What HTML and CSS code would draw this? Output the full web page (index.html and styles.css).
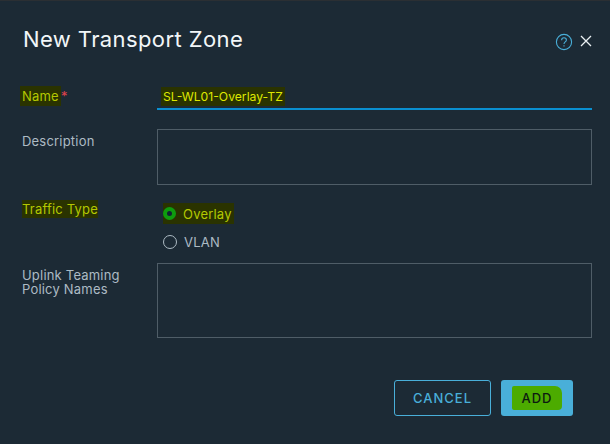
FILE: index.html
```html
<!DOCTYPE html>
<html lang="en">
<head>
    <meta charset="UTF-8">
    <title>New Transport Zone</title>
    <link rel="stylesheet" href="styles.css">
</head>
<body>
    <div class="modal">
        <div class="modal-header">
            <h2>New Transport Zone</h2>
            <svg class="help-icon" width="18" height="18" viewBox="0 0 18 18" fill="none" stroke="#49afd9" stroke-width="1.1">
                <circle cx="9" cy="9" r="7.6"/>
                <path d="M6.6 7.2c0-1.5 1.1-2.4 2.4-2.4s2.4.9 2.4 2.2c0 1.9-2.4 1.9-2.4 3.9"/>
                <path d="M9 12.2v1.2"/>
            </svg>
            <svg class="close-icon" width="12" height="12" viewBox="0 0 12 12" fill="none" stroke="#eaf0f3" stroke-width="1.3">
                <path d="M1 1l10 10M11 1L1 11"/>
            </svg>
        </div>

        <div class="form-row name-row">
            <label><span class="marked name-mark">Name</span><span class="required">*</span></label>
            <div class="name-input"><span class="marked value">SL-WL01-Overlay-TZ</span></div>
        </div>

        <div class="form-row desc-row">
            <label>Description</label>
            <div class="textbox desc-box"></div>
        </div>

        <div class="form-row type-row">
            <label><span class="marked">Traffic Type</span></label>
            <div class="radios">
                <div class="radio radio-on"><span class="dot"></span><span>Overlay</span></div>
                <div class="radio"><span class="dot"></span><span>VLAN</span></div>
            </div>
        </div>

        <div class="form-row uplink-row">
            <label>Uplink Teaming<br>Policy Names</label>
            <div class="textbox uplink-box"></div>
        </div>

        <div class="modal-footer">
            <button class="btn btn-cancel">CANCEL</button>
            <button class="btn btn-add"><span class="add-mark">ADD</span></button>
        </div>
    </div>
</body>
</html>
```

FILE: styles.css
```css
html, body {
    margin: 0;
    height: 100%;
}
body {
    background-color: #1c2a35;
    font-family: Inter, "Noto Sans", sans-serif;
    overflow: hidden;
}
.modal {
    width: 610px;
    height: 444px;
    box-sizing: border-box;
    padding: 23px 18px 0 23px;
    border-top: 1px solid #2b2f33;
}
.modal-header {
    display: flex;
    align-items: center;
    height: 30px;
}
.modal-header h2 {
    margin: 0;
    flex: 1;
    font-size: 22px;
    font-weight: 400;
    letter-spacing: 0.4px;
    color: #f2f6f8;
}
.help-icon {
    margin: 6px 7px 0 0;
}
.close-icon {
    margin: 4px 0 0 0;
}
.form-row {
    display: flex;
    margin-left: -1px;
    font-size: 13px;
    letter-spacing: 0.2px;
    color: #adbbc4;
}
.form-row label {
    width: 135px;
    flex: none;
    line-height: 14px;
}
.marked {
    background-color: #2a3300;
    color: #b4c800;
    padding: 1px 0;
}
.name-mark {
    padding: 2px;
    margin-left: -2px;
}
.required {
    color: #e0434c;
}
.name-row {
    margin-top: 30px;
    height: 26px;
}
.name-row label {
    padding-top: 5px;
}
.name-input {
    flex: 1;
    border-bottom: 2px solid #0a8fd0;
    padding: 4px 0 0 6px;
    height: 20px;
}
.value {
    color: #dfe800;
    font-size: 12.2px;
    letter-spacing: 0;
    padding: 2px;
    margin-left: -2px;
}
.textbox {
    flex: 1;
    border: 1px solid #4f5d67;
    box-sizing: border-box;
}
.desc-row {
    margin-top: 19px;
}
.desc-row label {
    padding-top: 5px;
}
.desc-box {
    height: 56px;
}
.type-row {
    margin-top: 16px;
}
.type-row label {
    padding-top: 1px;
}
.radios {
    display: flex;
    flex-direction: column;
    gap: 11px;
    padding: 3px 0 0 6px;
}
.radio {
    display: flex;
    align-items: center;
    gap: 7px;
    height: 17px;
}
.dot {
    width: 12px;
    height: 12px;
    border: 1px solid #adbbc4;
    border-radius: 50%;
    flex: none;
}
.radio-on {
    background-color: #2a3300;
    color: #b4c800;
    width: 71px;
    height: 21px;
    margin: -1px 0 -2px;
}
.radio-on .dot {
    border: 4px solid #0e9c0e;
    background-color: #123;
    width: 5px;
    height: 5px;
}
.uplink-row {
    margin-top: 13px;
}
.uplink-row label {
    padding-top: 5px;
}
.uplink-box {
    height: 75px;
}
.modal-footer {
    display: flex;
    justify-content: flex-end;
    gap: 10px;
    margin-top: 42px;
    padding-right: 19px;
}
.btn {
    height: 36px;
    border-radius: 3px;
    font-family: inherit;
    font-size: 13px;
    font-weight: 500;
    letter-spacing: 1px;
    padding: 0;
}
.btn-cancel {
    width: 97px;
    background: transparent;
    border: 1px solid #49afd9;
    color: #49afd9;
}
.btn-add {
    width: 72px;
    background-color: #49afd9;
    border: none;
    color: #0c1a10;
}
.add-mark {
    display: inline-block;
    background-color: #4cab00;
    padding: 4px 10px 4px;
    line-height: 16px;
    border-radius: 2px 7px 4px 2px;
}
```
